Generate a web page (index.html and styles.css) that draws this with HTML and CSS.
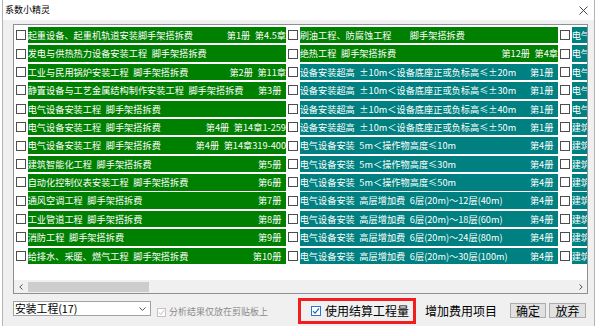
FILE: index.html
```html
<!DOCTYPE html>
<html>
  <head>
    <meta charset="utf-8" />
    <title>系数小精灵</title>
    <link rel="stylesheet" href="styles.css">
  </head>
  <body>
    <div class="window">
      <div class="titlebar">
        <span class="title">系数小精灵</span>
        <svg class="close" width="9" height="9" viewBox="0 0 9 9"><path d="M0.5 0.5L8.5 8.5M8.5 0.5L0.5 8.5" stroke="#333" stroke-width="0.9" fill="none"/></svg>
      </div>
      <div class="client">
        <div class="listbox">
          <div class="items">
            <!-- column 1 -->
            <div class="item"><span class="box"></span><div class="band green"><span>起重设备、起重机轨道安装脚手架搭拆费</span><span>第1册 第4.5章</span></div></div>
            <div class="item"><span class="box"></span><div class="band green"><span>发电与供热热力设备安装工程 脚手架搭拆费</span><span></span></div></div>
            <div class="item"><span class="box"></span><div class="band green"><span>工业与民用锅炉安装工程 脚手架搭拆费</span><span>第2册 第11章</span></div></div>
            <div class="item"><span class="box"></span><div class="band green"><span>静置设备与工艺金属结构制作安装工程 脚手架搭拆费</span><span class="tail">第3册</span></div></div>
            <div class="item"><span class="box"></span><div class="band green"><span>电气设备安装工程 脚手架搭拆费</span><span></span></div></div>
            <div class="item"><span class="box"></span><div class="band green"><span>电气设备安装工程 脚手架搭拆费</span><span>第4册 第14章1-259</span></div></div>
            <div class="item"><span class="box"></span><div class="band green"><span>电气设备安装工程 脚手架搭拆费</span><span>第4册 第14章319-400</span></div></div>
            <div class="item"><span class="box"></span><div class="band green"><span>建筑智能化工程 脚手架搭拆费</span><span class="tail">第5册</span></div></div>
            <div class="item"><span class="box"></span><div class="band green"><span>自动化控制仪表安装工程 脚手架搭拆费</span><span class="tail">第6册</span></div></div>
            <div class="item"><span class="box"></span><div class="band green"><span>通风空调工程 脚手架搭拆费</span><span class="tail">第7册</span></div></div>
            <div class="item"><span class="box"></span><div class="band green"><span>工业管道工程 脚手架搭拆费</span><span class="tail">第8册</span></div></div>
            <div class="item"><span class="box"></span><div class="band green"><span>消防工程 脚手架搭拆费</span><span class="tail">第9册</span></div></div>
            <div class="item"><span class="box"></span><div class="band green"><span>给排水、采暖、燃气工程 脚手架搭拆费</span><span class="tail">第10册</span></div></div>
            <!-- column 2 -->
            <div class="item"><span class="box"></span><div class="band green"><span>刷油工程、防腐蚀工程　&nbsp; 脚手架搭拆费</span><span></span></div></div>
            <div class="item"><span class="box"></span><div class="band green"><span>绝热工程 脚手架搭拆费</span><span>第12册 第4章</span></div></div>
            <div class="item"><span class="box"></span><div class="band teal"><span>设备安装超高 ±10m＜设备底座正或负标高≤±20m</span><span class="tail">第1册</span></div></div>
            <div class="item"><span class="box"></span><div class="band teal"><span>设备安装超高 ±10m＜设备底座正或负标高≤±30m</span><span class="tail">第1册</span></div></div>
            <div class="item"><span class="box"></span><div class="band teal"><span>设备安装超高 ±10m＜设备底座正或负标高≤±40m</span><span class="tail">第1册</span></div></div>
            <div class="item"><span class="box"></span><div class="band teal"><span>设备安装超高 ±10m＜设备底座正或负标高≤±50m</span><span class="tail">第1册</span></div></div>
            <div class="item"><span class="box"></span><div class="band teal"><span>电气设备安装 5m＜操作物高度≤10m</span><span class="tail">第4册</span></div></div>
            <div class="item"><span class="box"></span><div class="band teal"><span>电气设备安装 5m＜操作物高度≤30m</span><span class="tail">第4册</span></div></div>
            <div class="item"><span class="box"></span><div class="band teal"><span>电气设备安装 5m＜操作物高度≤50m</span><span class="tail">第4册</span></div></div>
            <div class="item"><span class="box"></span><div class="band teal"><span>电气设备安装 高层增加费 6层(20m)～12层(40m)</span><span class="tail">第4册</span></div></div>
            <div class="item"><span class="box"></span><div class="band teal"><span>电气设备安装 高层增加费 6层(20m)～18层(60m)</span><span class="tail">第4册</span></div></div>
            <div class="item"><span class="box"></span><div class="band teal"><span>电气设备安装 高层增加费 6层(20m)～24层(80m)</span><span class="tail">第4册</span></div></div>
            <div class="item"><span class="box"></span><div class="band teal"><span>电气设备安装 高层增加费 6层(20m)～30层(100m)</span><span class="tail">第4册</span></div></div>
            <!-- column 3 -->
            <div class="item"><span class="box"></span><div class="band teal"><span>电气设备安装 高层增加费 6层(20m)～36层(120m)</span><span class="tail">第4册</span></div></div>
            <div class="item"><span class="box"></span><div class="band teal"><span>电气设备安装 高层增加费 6层(20m)～42层(140m)</span><span class="tail">第4册</span></div></div>
            <div class="item"><span class="box"></span><div class="band teal"><span>电气设备安装 高层增加费 6层(20m)～48层(160m)</span><span class="tail">第4册</span></div></div>
            <div class="item"><span class="box"></span><div class="band teal"><span>电气设备安装 高层增加费 6层(20m)～54层(180m)</span><span class="tail">第4册</span></div></div>
            <div class="item"><span class="box"></span><div class="band teal"><span>电气设备安装 高层增加费 6层(20m)～60层(200m)</span><span class="tail">第4册</span></div></div>
            <div class="item"><span class="box"></span><div class="band teal"><span>建筑智能化 高层增加费 6层(20m)～12层(40m)</span><span class="tail">第5册</span></div></div>
            <div class="item"><span class="box"></span><div class="band teal"><span>建筑智能化 高层增加费 6层(20m)～18层(60m)</span><span class="tail">第5册</span></div></div>
            <div class="item"><span class="box"></span><div class="band teal"><span>建筑智能化 高层增加费 6层(20m)～24层(80m)</span><span class="tail">第5册</span></div></div>
            <div class="item"><span class="box"></span><div class="band teal"><span>建筑智能化 高层增加费 6层(20m)～30层(100m)</span><span class="tail">第5册</span></div></div>
            <div class="item"><span class="box"></span><div class="band teal"><span>建筑智能化 高层增加费 6层(20m)～36层(120m)</span><span class="tail">第5册</span></div></div>
            <div class="item"><span class="box"></span><div class="band teal"><span>建筑智能化 高层增加费 6层(20m)～42层(140m)</span><span class="tail">第5册</span></div></div>
            <div class="item"><span class="box"></span><div class="band teal"><span>建筑智能化 高层增加费 6层(20m)～48层(160m)</span><span class="tail">第5册</span></div></div>
            <div class="item"><span class="box"></span><div class="band teal"><span>建筑智能化 高层增加费 6层(20m)～54层(180m)</span><span class="tail">第5册</span></div></div>
          </div>
          <div class="hscroll">
            <span class="arrow"><svg width="4" height="6" viewBox="0 0 4 6"><path d="M3.5 0.5L0.8 3L3.5 5.5" stroke="#555" stroke-width="1" fill="none"/></svg></span>
            <span class="thumb"></span>
            <span class="spacer"></span>
            <span class="arrow"><svg width="4" height="6" viewBox="0 0 4 6"><path d="M0.5 0.5L3.2 3L0.5 5.5" stroke="#555" stroke-width="1" fill="none"/></svg></span>
          </div>
        </div>

        <div class="footer">
          <div class="combo">
            <span>安装工程(17)</span>
            <svg width="7" height="4" viewBox="0 0 7 4"><path d="M0.5 0.5L3.5 3.3L6.5 0.5" stroke="#444" stroke-width="0.9" fill="none"/></svg>
          </div>
          <div class="option disabled">
            <span class="check"><svg width="7" height="7" viewBox="0 0 7 7"><path d="M0.8 3.6L2.7 5.5L6.2 1.2" stroke="#bdbdbd" stroke-width="1" fill="none"/></svg></span>
            <span class="option-label">分析结果仅放在剪贴板上</span>
          </div>
          <div class="marked">
            <span class="check on"><svg width="8" height="8" viewBox="0 0 8 8"><path d="M1 4.1L3.1 6.2L7 1.4" stroke="#1d5fb3" stroke-width="1.1" fill="none"/></svg></span>
            <span class="marked-label">使用结算工程量</span>
          </div>
          <span class="link">增加费用项目</span>
          <button class="btn ok">确定</button>
          <button class="btn cancel">放弃</button>
        </div>
      </div>
    </div>
  </body>
</html>
```

FILE: styles.css
```css
html {
  margin: 0px;
  padding: 0px;
}
body {
  font-family: 'Noto Sans CJK SC', sans-serif;
  margin: 0px;
  padding: 0px;
  width: 598px;
  height: 326px;
  overflow: hidden;
  background-color: #fff;
  color: #000;
}
.window {
  margin-left: 2px;
  width: 591px;
  height: 326px;
  border-left: 1px solid #b4b4b4;
  border-right: 1px solid #b4b4b4;
  background-color: #f0f0f0;
}
.titlebar {
  height: 20px;
  background-color: #fff;
  display: flex;
  align-items: center;
  justify-content: space-between;
  padding: 0px 6px 0px 2px;
}
.title {
  font-size: 9px;
  line-height: 12px;
}
.client {
  padding: 4px 6px 0px 10px;
}
.listbox {
  height: 268px;
  border: 1px solid #8c8f96;
  background-color: #fff;
  display: flex;
  flex-direction: column;
}
.items {
  flex: 1;
  min-height: 0;
  overflow: hidden;
  padding: 1px 0px 0px 1.7px;
  display: grid;
  grid-template-rows: repeat(13, 18.4px);
  grid-auto-flow: column;
  grid-auto-columns: 272px;
  align-content: start;
}
.item {
  display: flex;
  align-items: center;
  width: 272px;
}
.box {
  width: 10px;
  height: 10px;
  box-sizing: border-box;
  border: 1px solid #4d4d4d;
  background-color: #fff;
  margin-right: 2px;
  flex: none;
}
.band {
  width: 258.3px;
  height: 16.5px;
  display: flex;
  justify-content: space-between;
  overflow: hidden;
  white-space: nowrap;
  color: #fff;
  font-size: 9.2px;
  line-height: 16.5px;
  word-spacing: 2.5px;
  flex: none;
}
.band span {
  flex: none;
}
.band .tail {
  padding-right: 4.6px;
}
.green {
  background-color: #008000;
}
.teal {
  background-color: #008080;
}
.hscroll {
  height: 13px;
  background-color: #f0f0f0;
  display: flex;
  align-items: center;
}
.arrow {
  width: 13px;
  height: 13px;
  display: flex;
  align-items: center;
  justify-content: center;
  flex: none;
}
.thumb {
  width: 121px;
  height: 10px;
  margin-left: 1px;
  background-color: #cdcdcd;
  flex: none;
}
.spacer {
  flex: 1;
}
.footer {
  display: flex;
  align-items: flex-start;
  margin-top: 4px;
}
.combo {
  width: 138px;
  height: 15px;
  margin-top: 3px;
  box-sizing: border-box;
  border: 1px solid #a2a2a2;
  background-color: #fff;
  display: flex;
  align-items: center;
  justify-content: space-between;
  padding: 0px 4px 0px 1px;
  font-size: 10.8px;
  line-height: 13px;
}
.option {
  display: flex;
  align-items: center;
  height: 12px;
  margin-top: 8px;
  margin-left: 6px;
}
.check {
  width: 9px;
  height: 9px;
  box-sizing: border-box;
  border: 1px solid #c2c2c2;
  background-color: #fff;
  display: flex;
  align-items: center;
  justify-content: center;
  flex: none;
}
.option-label {
  margin-left: 3px;
  font-size: 9px;
  line-height: 12px;
  color: #8a8a8a;
}
.marked {
  width: 118px;
  height: 26px;
  box-sizing: border-box;
  border: 3px solid #f01e1e;
  margin-left: 30px;
  padding-left: 10px;
  display: flex;
  align-items: center;
}
.check.on {
  width: 10px;
  height: 10px;
  border-color: #2b74d3;
}
.marked-label {
  margin-left: 4px;
  font-size: 12px;
  line-height: 16px;
}
.link {
  margin-left: 9px;
  margin-top: 5px;
  font-size: 12px;
  line-height: 16px;
}
.btn {
  height: 15px;
  margin-top: 5px;
  padding: 0px;
  box-sizing: border-box;
  border: 1px solid #adadad;
  background-color: #e1e1e1;
  font-family: 'Noto Sans CJK SC', sans-serif;
  font-size: 12px;
  line-height: 12px;
  color: #000;
}
.ok {
  width: 36px;
  margin-left: 13px;
}
.cancel {
  width: 37px;
  margin-left: 3px;
}
```
